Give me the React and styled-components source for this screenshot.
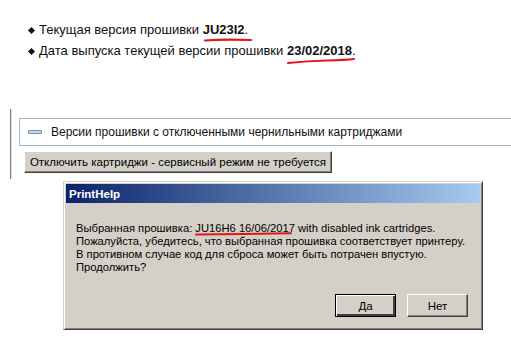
import React from "react";
import styled, { createGlobalStyle } from "styled-components";

const Global = createGlobalStyle`
  html, body { margin: 0; padding: 0; background: #fff; }
  body { width: 511px; height: 355px; overflow: hidden; }
`;

const Page = styled.div`
  width: 511px;
  height: 355px;
  overflow: hidden;
  display: flex;
  flex-direction: column;
  font-family: "Liberation Sans", Arial, sans-serif;
  color: #111;
`;

const InfoList = styled.ul`
  list-style: none;
  margin: 0;
  padding: 21px 0 0 29px;
  display: flex;
  flex-direction: column;
  gap: 3px;
`;

const InfoItem = styled.li`
  display: flex;
  align-items: center;
  gap: 4px;
  font-size: 13px;
  line-height: 18px;
  white-space: nowrap;
`;

const Bullet = styled.span`
  width: 5px;
  height: 5px;
  background: #111;
  transform: rotate(45deg);
  margin-right: 1px;
  flex: none;
`;

const Marked = styled.span`
  position: relative;
  font-weight: ${(p) => (p.$bold ? 700 : 400)};
`;

const Scribble = styled.svg`
  position: absolute;
  left: ${(p) => p.$left}px;
  top: ${(p) => p.$top}px;
  overflow: visible;
  pointer-events: none;
`;

const Panel = styled.div`
  margin: 49px 0 0 10px;
  border-left: 1px solid #808080;
  box-shadow: inset 1px 0 0 #e0e0e0;
  padding: 9px 0 6px 8px;
  display: flex;
  flex-direction: column;
  align-items: flex-start;
  gap: 5px;
  font-family: "Liberation Sans", Tahoma, sans-serif;
`;

const Group = styled.div`
  align-self: stretch;
  margin-right: -20px;
  height: 26px;
  border: 1px solid #a7b7c8;
  display: flex;
  align-items: center;
  gap: 9px;
  padding-left: 8px;
  font-size: 12px;
  color: #111;
  white-space: nowrap;
`;

const MinusIcon = styled.span`
  width: 12px;
  height: 2px;
  border: 1px solid #6f8db5;
  border-radius: 1px;
  background: #c8daf0;
  flex: none;
`;

const ClassicButton = styled.button`
  font-family: "Liberation Sans", Tahoma, sans-serif;
  font-size: ${(p) => p.$fs || 11.5}px;
  color: #000;
  background: #d4d0c8;
  border: 1px solid;
  border-color: ${(p) => (p.$default ? "#000" : "#fff #404040 #404040 #fff")};
  box-shadow: ${(p) =>
    p.$default
      ? "inset 1px 1px 0 #fff, inset -2px -2px 0 #404040"
      : "inset -1px -1px 0 #808080"};
  padding: 0;
  margin: 0 0 0 ${(p) => p.$ml || 0}px;
  height: ${(p) => p.$h || 23}px;
  width: ${(p) => p.$w}px;
  display: flex;
  align-items: center;
  justify-content: center;
  white-space: nowrap;
  flex: none;
`;

const Dialog = styled.div`
  margin: 2px 0 0 63px;
  width: 420px;
  height: 149px;
  box-sizing: border-box;
  background: #d4d0c8;
  border: 1px solid;
  border-color: #d4d0c8 #404040 #404040 #d4d0c8;
  box-shadow: inset 1px 1px 0 #fff, inset -1px -1px 0 #808080;
  padding: 2px;
  display: flex;
  flex-direction: column;
  font-family: "Liberation Sans", Tahoma, sans-serif;
  flex: none;
`;

const TitleBar = styled.div`
  height: 19px;
  background: linear-gradient(to right, #0a246a, #a6caf0);
  color: #fff;
  font-weight: 700;
  font-size: 11.5px;
  display: flex;
  align-items: center;
  padding-left: 3px;
`;

const Message = styled.div`
  padding: 19px 0 0 10px;
  font-size: 11.2px;
  line-height: 13px;
  color: #000;
  white-space: nowrap;
`;

const ButtonRow = styled.div`
  margin-top: auto;
  display: flex;
  justify-content: flex-end;
  gap: 11px;
  padding: 0 12px 10px 0;
`;

export default function App() {
  return (
    <Page>
      <Global />
      <InfoList>
        <InfoItem>
          <Bullet />
          <span>
            Текущая версия прошивки{" "}
            <Marked $bold>
              JU23I2
              <Scribble $left={1} $top={16} width="48" height="4">
                <path d="M1 2.5 Q 20 1, 47 2" stroke="#e0161b" strokeWidth="2.2" fill="none" strokeLinecap="round" />
              </Scribble>
            </Marked>
            .
          </span>
        </InfoItem>
        <InfoItem>
          <Bullet />
          <span>
            Дата выпуска текущей версии прошивки{" "}
            <Marked $bold>
              23/02/2018
              <Scribble $left={0} $top={15} width="68" height="6">
                <path d="M1 5 Q 20 3, 40 2.5 T 67 1" stroke="#e0161b" strokeWidth="2.2" fill="none" strokeLinecap="round" />
              </Scribble>
            </Marked>
            .
          </span>
        </InfoItem>
      </InfoList>

      <Panel>
        <Group>
          <MinusIcon />
          Версии прошивки с отключенными чернильными картриджами
        </Group>
        <ClassicButton $w={308} $h={22} $fs={11.5} $ml={5}>
          Отключить картриджи - сервисный режим не требуется
        </ClassicButton>
      </Panel>

      <Dialog>
        <TitleBar>PrintHelp</TitleBar>
        <Message>
          Выбранная прошивка:{" "}
          <Marked>
            JU16H6 16/06/2017
            <Scribble $left={0} $top={10} width="97" height="4">
              <path d="M1 2.5 Q 50 2.2, 96 1.2" stroke="#e0161b" strokeWidth="2" fill="none" strokeLinecap="round" />
            </Scribble>
          </Marked>{" "}
          with disabled ink cartridges.
          <br />
          Пожалуйста, убедитесь, что выбранная прошивка соответствует принтеру.
          <br />
          В противном случае код для сброса может быть потрачен впустую.
          <br />
          Продолжить?
        </Message>
        <ButtonRow>
          <ClassicButton $w={61} $default>Да</ClassicButton>
          <ClassicButton $w={61}>Нет</ClassicButton>
        </ButtonRow>
      </Dialog>
    </Page>
  );
}
